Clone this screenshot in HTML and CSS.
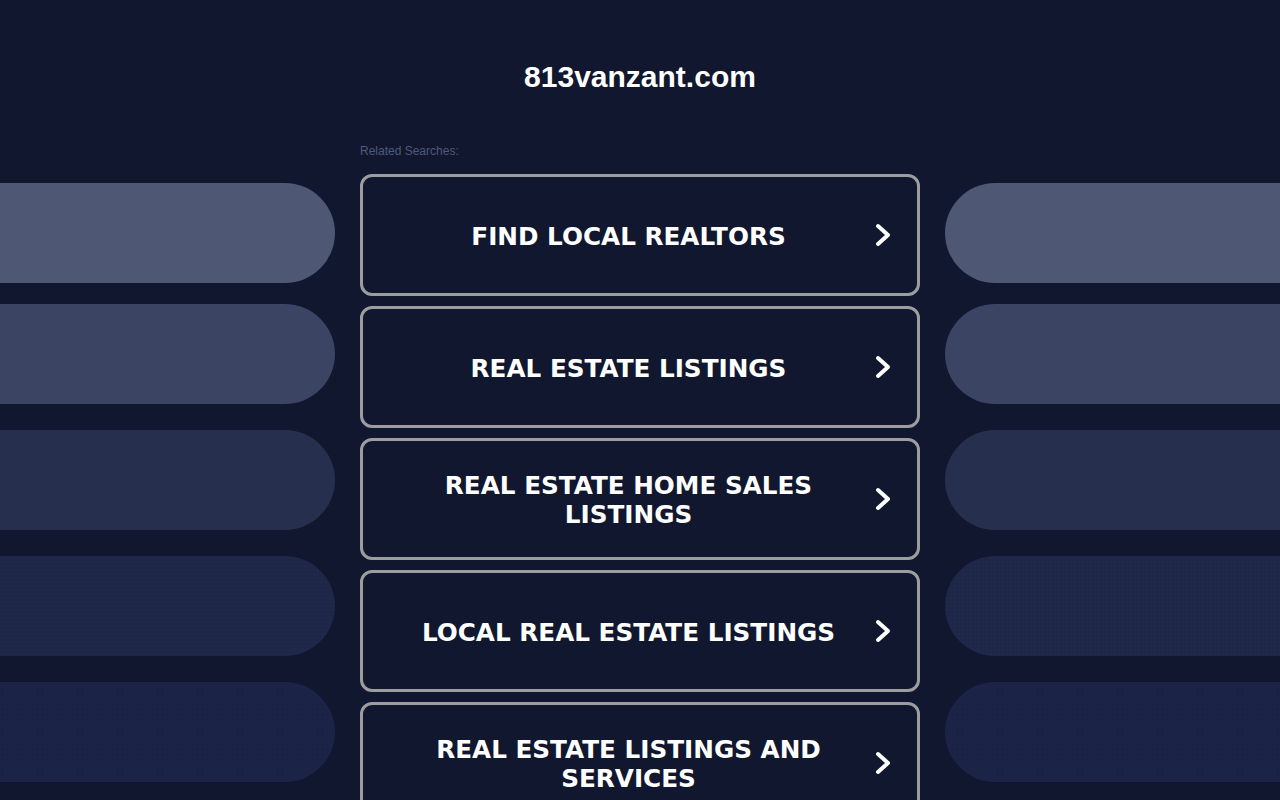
FILE: index.html
```html
<!DOCTYPE html>
<html lang="en">
<head>
<meta charset="utf-8">
<title>813vanzant.com</title>
<link rel="stylesheet" href="styles.css">
</head>
<body>
<div class="page">
  <aside class="side side-left">
    <div class="pill pill-1"></div>
    <div class="pill pill-2"></div>
    <div class="pill pill-3"></div>
    <div class="pill pill-4"></div>
    <div class="pill pill-5"></div>
  </aside>
  <main class="center">
    <h1 class="title">813vanzant.com</h1>
    <div class="related">Related Searches:</div>
    <div class="links">
      <a class="link" href="#"><span class="label">FIND LOCAL REALTORS</span><svg class="chev" viewBox="0 0 20 26" width="20" height="26"><polyline points="5,4 15,13 5,22" fill="none" stroke="#fff" stroke-width="4" stroke-linecap="round" stroke-linejoin="round"/></svg></a>
      <a class="link" href="#"><span class="label">REAL ESTATE LISTINGS</span><svg class="chev" viewBox="0 0 20 26" width="20" height="26"><polyline points="5,4 15,13 5,22" fill="none" stroke="#fff" stroke-width="4" stroke-linecap="round" stroke-linejoin="round"/></svg></a>
      <a class="link" href="#"><span class="label">REAL ESTATE HOME SALES LISTINGS</span><svg class="chev" viewBox="0 0 20 26" width="20" height="26"><polyline points="5,4 15,13 5,22" fill="none" stroke="#fff" stroke-width="4" stroke-linecap="round" stroke-linejoin="round"/></svg></a>
      <a class="link" href="#"><span class="label">LOCAL REAL ESTATE LISTINGS</span><svg class="chev" viewBox="0 0 20 26" width="20" height="26"><polyline points="5,4 15,13 5,22" fill="none" stroke="#fff" stroke-width="4" stroke-linecap="round" stroke-linejoin="round"/></svg></a>
      <a class="link" href="#"><span class="label">REAL ESTATE LISTINGS AND SERVICES</span><svg class="chev" viewBox="0 0 20 26" width="20" height="26"><polyline points="5,4 15,13 5,22" fill="none" stroke="#fff" stroke-width="4" stroke-linecap="round" stroke-linejoin="round"/></svg></a>
    </div>
  </main>
  <aside class="side side-right">
    <div class="pill pill-1"></div>
    <div class="pill pill-2"></div>
    <div class="pill pill-3"></div>
    <div class="pill pill-4"></div>
    <div class="pill pill-5"></div>
  </aside>
</div>
</body>
</html>
```
FILE: styles.css
```css
html, body {
  margin: 0;
  padding: 0;
  background: #11172e;
  height: 800px;
  overflow: hidden;
}
body {
  font-family: "Liberation Sans", Arial, sans-serif;
  color: #fff;
}
.page {
  display: grid;
  grid-template-columns: 335px 560px 335px;
  column-gap: 25px;
}
.side {
  display: flex;
  flex-direction: column;
  padding-top: 183px;
  gap: 26px;
}
.pill {
  height: 100px;
}
.side-left .pill {
  border-radius: 0 50px 50px 0;
}
.side-right .pill {
  border-radius: 50px 0 0 50px;
}
.pill-1 { background: #4e5875; margin-bottom: -5px; }
.pill-2 { background: #3b4462; }
.pill-3 { background: #262f4d; }
.pill-4 {
  background-color: #1e2747;
  background-image: radial-gradient(rgba(50, 62, 98, 0.18) 0.6px, transparent 0.9px);
  background-size: 4px 4px;
}
.pill-5 {
  background-color: #1b2446;
  background-image: radial-gradient(rgba(14, 20, 40, 0.3) 0.6px, transparent 0.9px);
  background-size: 5px 5px;
}
.center {
  display: flex;
  flex-direction: column;
}
.title {
  margin: 0;
  padding-top: 60px;
  font-size: 30px;
  line-height: 34px;
  font-weight: bold;
  text-align: center;
  color: #fff;
}
.related {
  margin-top: 50px;
  font-size: 12px;
  line-height: 14px;
  color: #4f5a7b;
}
.links {
  margin-top: 16px;
  display: flex;
  flex-direction: column;
  gap: 10px;
}
.link {
  box-sizing: border-box;
  height: 122px;
  border: 3px solid #9d9d9f;
  border-radius: 12px;
  display: flex;
  align-items: center;
  padding: 0 24px 0 30px;
  text-decoration: none;
  color: #fff;
}
.label {
  flex: 1;
  text-align: center;
  font-family: "DejaVu Sans", Verdana, sans-serif;
  font-weight: bold;
  font-size: 24.7px;
  line-height: 29px;
  padding-top: 2px;
}
.chev {
  flex: none;
  margin-left: 9px;
  display: block;
}
```
